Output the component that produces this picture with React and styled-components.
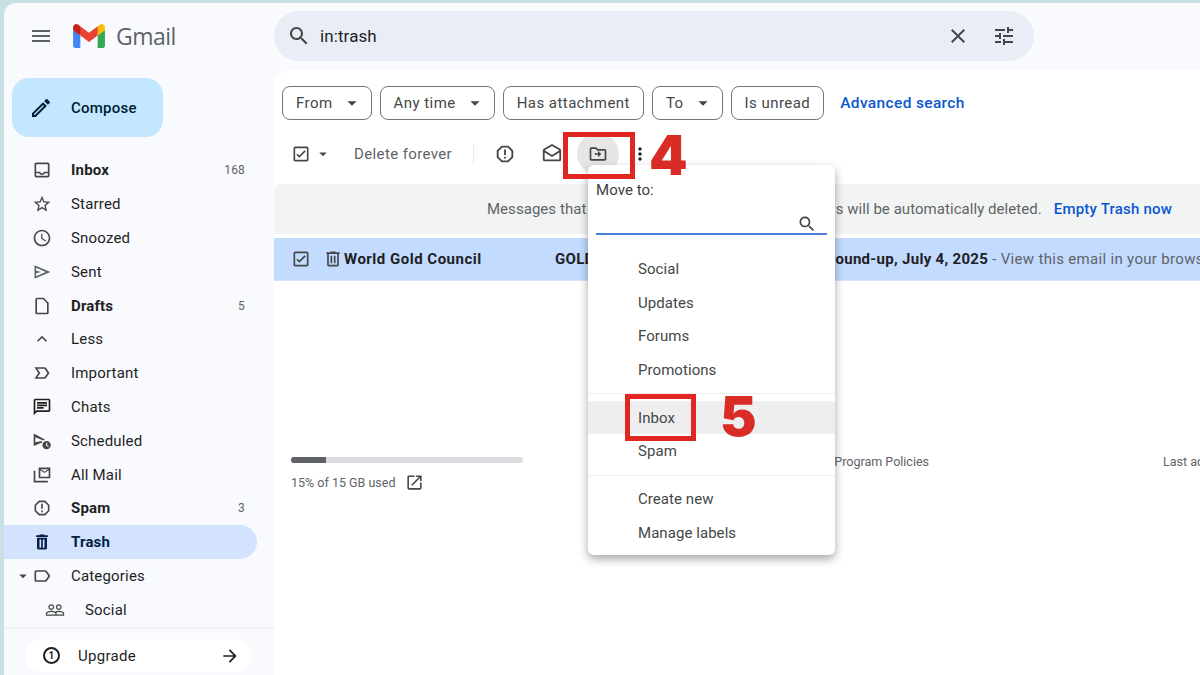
import React from "react";
import styled, { createGlobalStyle } from "styled-components";

const GlobalStyle = createGlobalStyle`
  html, body {
    margin: 0;
    height: 675px;
    overflow: hidden;
    background: #c9e1e5;
    font-family: Roboto, "Liberation Sans", sans-serif;
    color: #1f1f1f;
  }
  * { box-sizing: border-box; }
`;

const paths = {
  menu: "M3 18h18v-2H3v2zm0-5h18v-2H3v2zm0-7v2h18V6H3z",
  search: "M15.5 14h-.79l-.28-.27C15.41 12.59 16 11.11 16 9.5 16 5.91 13.09 3 9.5 3S3 5.91 3 9.5 5.91 16 9.5 16c1.61 0 3.09-.59 4.23-1.57l.27.28v.79l5 4.99L20.49 19l-4.99-5zm-6 0C7.01 14 5 11.99 5 9.5S7.01 5 9.5 5 14 7.01 14 9.5 11.99 14 9.5 14z",
  close: "M19 6.41L17.59 5 12 10.59 6.41 5 5 6.41 10.59 12 5 17.59 6.41 19 12 13.41 17.59 19 19 17.59 13.41 12z",
  tune: "M3 17v2h6v-2H3zM3 5v2h10V5H3zm10 16v-2h8v-2h-8v-2h-2v6h2zM7 9v2H3v2h4v2h2V9H7zm14 4v-2H11v2h10zm-6-4h2V7h4V5h-4V3h-2v6z",
  edit: "M14.06 9.02l.92.92L5.92 19H5v-.92l9.06-9.06M17.66 3c-.25 0-.51.1-.7.29l-1.83 1.83 3.75 3.75 1.83-1.83c.39-.39.39-1.02 0-1.41l-2.34-2.34c-.2-.2-.45-.29-.71-.29zm-3.6 3.19L3 17.25V21h3.75L17.81 9.94l-3.75-3.75z",
  inbox: "M19 3H5c-1.1 0-2 .9-2 2v14c0 1.1.9 2 2 2h14c1.1 0 2-.9 2-2V5c0-1.1-.9-2-2-2zm0 16H5v-3h3.56c.69 1.19 1.97 2 3.44 2s2.75-.81 3.44-2H19v3zm0-5h-4.99c0 1.1-.9 2-2 2s-2-.9-2-2H5V5h14v9z",
  star: "M22 9.24l-7.19-.62L12 2 9.19 8.63 2 9.24l5.46 4.73L5.82 21 12 17.27 18.18 21l-1.63-7.03L22 9.24zM12 15.4l-3.76 2.27 1-4.28-3.32-2.88 4.38-.38L12 6.1l1.71 4.04 4.38.38-3.32 2.88 1 4.28L12 15.4z",
  clock: "M11.99 2C6.47 2 2 6.48 2 12s4.47 10 9.99 10C17.52 22 22 17.52 22 12S17.52 2 11.99 2zM12 20c-4.42 0-8-3.58-8-8s3.58-8 8-8 8 3.58 8 8-3.58 8-8 8zm.5-13H11v6l5.25 3.15.75-1.23-4.5-2.67z",
  send: "M3 4v16l19-8L3 4zm2 3l11.5 5L5 17v-3.4l6-1.6-6-1.6V7z",
  draft: "M14 2H6c-1.1 0-1.99.9-1.99 2L4 20c0 1.1.89 2 1.99 2H18c1.1 0 2-.9 2-2V8l-6-6zM6 20V4h7.17L18 8.83V20H6z",
  less: "M12 8l-6 6 1.41 1.41L12 10.83l4.59 4.58L18 14z",
  important: "M15 19H3l4.5-7L3 5h12c.65 0 1.26.31 1.63.84L21 12l-4.37 6.16c-.37.52-.98.84-1.63.84zm-8.5-2H15l3.5-5L15 7H6.5l3.5 5-3.5 5z",
  chat: "M20 2H4c-1.1 0-1.99.9-1.99 2L2 22l4-4h14c1.1 0 2-.9 2-2V4c0-1.1-.9-2-2-2zm0 14H5.17L4 17.17V4h16v12zM6 12h8v2H6zm0-3h12v2H6zm0-3h12v2H6z",
  scheduled: "M2 3v15l10-4.2V12l-8 1.6V7.4l9.6 3.9 1.9-1L2 3zM17.5 12a5 5 0 100 10 5 5 0 000-10zm-.6 2h1.3v3l2 1.2-.6 1-2.7-1.6V14z",
  allMail: "M8 3h14v13H8V3zm2 3.2V14h10V6.2l-5 3.4-5-3.4zM10.6 5l4.4 3 4.4-3h-8.8zM2 7h2v12h15v2H2V7z",
  report: "M15.73 3H8.27L3 8.27v7.46L8.27 21h7.46L21 15.73V8.27L15.73 3zM19 14.9L14.9 19H9.1L5 14.9V9.1L9.1 5h5.8L19 9.1v5.8zM11 7h2v6h-2zm0 8h2v2h-2z",
  trash: "M15.5 4l-1-1h-5l-1 1H5v2h14V4h-3.5zM6 7v12c0 1.1.9 2 2 2h8c1.1 0 2-.9 2-2V7H6zm3 2h2v10H9V9zm4 0h2v10h-2V9z",
  trashLine: "M15 4V3H9v1H4v2h1v13c0 1.1.9 2 2 2h10c1.1 0 2-.9 2-2V6h1V4h-5zm2 15H7V6h10v13zM9 8h2v9H9zm4 0h2v9h-2z",
  label: "M17.63 5.84C17.27 5.33 16.67 5 16 5L5 5.01C3.9 5.01 3 5.9 3 7v10c0 1.1.9 1.99 2 1.99L16 19c.67 0 1.27-.33 1.63-.84L22 12l-4.37-6.16zM16 17H5V7h11l3.55 5L16 17z",
  people: "M16.5 13c-1.2 0-3.07.34-4.5 1-1.43-.67-3.3-1-4.5-1C5.33 13 1 14.08 1 16.25V19h22v-2.75c0-2.17-4.33-3.25-6.5-3.25zm-4 4.5h-10v-1.25c0-.54 2.56-1.75 5-1.75s5 1.21 5 1.75v1.25zm9 0H14v-1.25c0-.46-.2-.86-.52-1.22.88-.3 1.96-.53 3.02-.53 2.44 0 5 1.21 5 1.75v1.25zM7.5 12c1.93 0 3.5-1.57 3.5-3.5S9.43 5 7.5 5 4 6.57 4 8.5 5.57 12 7.5 12zm0-5.5c1.1 0 2 .9 2 2s-.9 2-2 2-2-.9-2-2 .9-2 2-2zm9 5.5c1.93 0 3.5-1.57 3.5-3.5S18.43 5 16.5 5 13 6.57 13 8.5s1.57 3.5 3.5 3.5zm0-5.5c1.1 0 2 .9 2 2s-.9 2-2 2-2-.9-2-2 .9-2 2-2z",
  arrow: "M12 4l-1.41 1.41L16.17 11H4v2h12.17l-5.58 5.59L12 20l8-8z",
  checkbox: "M19 3H5c-1.1 0-2 .9-2 2v14c0 1.1.9 2 2 2h14c1.1 0 2-.9 2-2V5c0-1.1-.9-2-2-2zm0 16H5V5h14v14zM17.6 9l-1.4-1.4-6.2 6.2-2.2-2.2L6.4 13l3.6 3.6L17.6 9z",
  caret: "M7 10l5 5 5-5z",
  openMail: "M21.99 8c0-.72-.37-1.35-.94-1.7L12 1 2.95 6.3C2.38 6.65 2 7.28 2 8v10c0 1.1.9 2 2 2h16c1.1 0 2-.9 2-2l-.01-10zM20 8v.01L12 13 4 8l8-4.68L20 8zM4 18v-7.66l8 5.02 7.99-4.99L20 18H4z",
  moveTo: "M20 6h-8l-2-2H4c-1.1 0-2 .9-2 2v12c0 1.1.9 2 2 2h16c1.1 0 2-.9 2-2V8c0-1.1-.9-2-2-2zm0 12H4V6h5.17l2 2H20v10zm-8-2l4-4-4-4v3H8v2h4v3z",
  dots: "M12 8c1.1 0 2-.9 2-2s-.9-2-2-2-2 .9-2 2 .9 2 2 2zm0 2c-1.1 0-2 .9-2 2s.9 2 2 2 2-.9 2-2-.9-2-2-2zm0 6c-1.1 0-2 .9-2 2s.9 2 2 2 2-.9 2-2-.9-2-2-2z",
  open: "M19 19H5V5h7V3H5c-1.11 0-2 .9-2 2v14c0 1.1.89 2 2 2h14c1.1 0 2-.89 2-2v-7h-2v7zM14 3v2h3.59l-9.83 9.83 1.41 1.41L19 6.41V10h2V3h-7z"
};

const Svg = styled.svg`
  display: block;
  flex: none;
  fill: currentColor;
`;

const Icon = ({ name, size = 20, color = "#444746" }) => (
  <Svg viewBox="0 0 24 24" width={size} height={size} style={{ color }}>
    <path fillRule="evenodd" d={paths[name]} />
  </Svg>
);

const Page = styled.div`
  display: flex;
  margin-top: 3px;
  margin-left: 4px;
  width: 1196px;
  height: 672px;
  position: relative;
  background: #f8fafd;
  border-top-left-radius: 12px;
  overflow: hidden;
`;

const Sidebar = styled.aside`
  width: 270px;
  flex: none;
  display: flex;
  flex-direction: column;
`;

const Brand = styled.div`
  height: 66px;
  display: flex;
  align-items: center;
  padding-left: 25px;
`;

const Logo = styled.svg`
  display: block;
  width: 32px;
  height: 24px;
  margin-left: 20px;
`;

const BrandName = styled.span`
  margin-left: 11px;
  font-size: 23px;
  color: #5f6368;
  font-family: "Open Sans", sans-serif;
  letter-spacing: -0.5px;
`;

const Compose = styled.button`
  display: flex;
  align-items: center;
  width: 151px;
  height: 59px;
  margin: 9px 0 16.5px 8px;
  padding: 0 0 0 17px;
  border: 0;
  border-radius: 17px;
  background: #c2e7ff;
  font: 500 15px Roboto, sans-serif;
  letter-spacing: 0.25px;
  color: #001d35;
  gap: 18px;
`;

const Nav = styled.nav`
  flex: 1;
  min-height: 0;
`;

const NavRow = styled.div`
  height: 33.8px;
  width: 253px;
  display: flex;
  align-items: center;
  padding-left: ${p => (p.$sub ? "41px" : "28px")};
  padding-right: 12px;
  border-radius: 0 17px 17px 0;
  position: relative;
  background: ${p => (p.$active ? "#d3e3fd" : "transparent")};
  color: ${p => (p.$active ? "#041e49" : "#1f1f1f")};
  font-size: 15px;
  letter-spacing: 0.18px;
  font-weight: ${p => (p.$bold ? 700 : 400)};
`;

const NavLabel = styled.span`
  flex: 1;
  margin-left: ${p => (p.$sub ? "20px" : "19px")};
`;

const NavCount = styled.span`
  font-size: 12px;
  font-weight: 400;
  color: #5f6368;
`;

const TreeCaret = styled.span`
  position: absolute;
  left: 10px;
  top: 8px;
  display: block;
`;

const SideFoot = styled.div`
  height: 48px;
  border-top: 2px solid #eff1f4;
  padding: 10px 0 0 21px;
`;

const Upgrade = styled.div`
  width: 227px;
  height: 33px;
  border-radius: 17px;
  background: #fff;
  display: flex;
  align-items: center;
  padding: 0 12px 0 18px;
  font-size: 15px;
  letter-spacing: 0.3px;
`;

const UpgradeBadge = styled.span`
  width: 17px;
  height: 17px;
  border: 2px solid #1f1f1f;
  border-radius: 50%;
  display: flex;
  align-items: center;
  justify-content: center;
  font-size: 10px;
  font-weight: 700;
`;

const UpgradeLabel = styled.span`
  flex: 1;
  margin-left: 18px;
`;

const Content = styled.main`
  flex: 1;
  min-width: 0;
  display: flex;
  flex-direction: column;
`;

const SearchWrap = styled.div`
  height: 67px;
  padding-top: 8px;
`;

const SearchBar = styled.div`
  width: 760px;
  height: 50px;
  border-radius: 25px;
  background: #e9eef6;
  display: flex;
  align-items: center;
  padding: 0 18px 0 13px;
  font-size: 17px;
  letter-spacing: 0.1px;
  color: #1f1f1f;
`;

const SearchText = styled.span`
  flex: 1;
  margin-left: 9px;
`;

const SearchAction = styled.span`
  margin-left: 22px;
`;

const Panel = styled.section`
  flex: 1;
  background: #fff;
  border-top-left-radius: 16px;
  min-height: 0;
  overflow: hidden;
`;

const Filters = styled.div`
  display: flex;
  align-items: center;
  gap: 8px;
  padding: 16px 0 0 8px;
`;

const Chip = styled.div`
  height: 34px;
  display: flex;
  align-items: center;
  gap: 8px;
  padding: 0 ${p => (p.$caret ? "8px" : "13px")} 0 13px;
  border: 1px solid #747775;
  border-radius: 8px;
  font-size: 15px;
  letter-spacing: 0.45px;
  color: #444746;
`;

const AdvancedLink = styled.a`
  margin-left: 8px;
  font-size: 15.5px;
  font-weight: 500;
  letter-spacing: 0.35px;
  color: #0b57d0;
`;

const Toolbar = styled.div`
  height: 46px;
  margin-top: 11px;
  display: flex;
  align-items: center;
  padding-left: 17px;
  color: #444746;
  font-size: 15px;
  letter-spacing: 0.38px;
`;

const DeleteLabel = styled.span`
  margin: 0 21px 0 19px;
  color: #5f6368;
`;

const ToolDivider = styled.span`
  width: 1px;
  height: 20px;
  background: #e8eaed;
`;

const ToolButton = styled.span`
  width: ${p => p.$w || 42}px;
  height: 42px;
  flex: none;
  margin-left: ${p => p.$gap || 0}px;
  display: flex;
  align-items: center;
  justify-content: center;
  border-radius: 50%;
  background: ${p => (p.$on ? "#e6e6e6" : "transparent")};
`;

const Notice = styled.div`
  height: 50px;
  margin-top: 7px;
  display: flex;
  align-items: center;
  justify-content: flex-end;
  padding-right: 28px;
  background: #f2f4f3;
  border-radius: 8px 0 0 0;
  font-size: 15px;
  letter-spacing: 0.05px;
  color: #5f6368;
  white-space: nowrap;
`;

const NoticeLink = styled.a`
  margin-left: 12px;
  font-weight: 500;
  letter-spacing: 0.2px;
  color: #0b57d0;
`;

const MailRow = styled.div`
  height: 43px;
  margin-top: 4px;
  display: flex;
  align-items: center;
  padding-left: 17px;
  background: #c2dbff;
  border-bottom: 1px solid #d5e3f7;
  font-size: 15px;
  letter-spacing: 0.2px;
  white-space: nowrap;
  overflow: hidden;
`;

const Sender = styled.b`
  width: 211px;
  flex: none;
  margin-left: 1px;
  letter-spacing: 0.5px;
  color: #202124;
`;

const Subject = styled.b`
  letter-spacing: 0.3px;
  color: #202124;
`;

const Snippet = styled.span`
  letter-spacing: 0.32px;
  color: #5f6368;
`;

const TrashSlot = styled.span`
  margin-left: 12px;
`;

const Foot = styled.div`
  display: flex;
  padding: 176px 0 0 17px;
  font-size: 12.5px;
  color: #5f6368;
  white-space: nowrap;
`;

const Storage = styled.div`
  width: 232px;
  flex: none;
`;

const StorageTrack = styled.div`
  height: 6px;
  border-radius: 3px;
  background: #dadce0;
  overflow: hidden;
`;

const StorageFill = styled.div`
  height: 100%;
  background: #5f6368;
`;

const StorageText = styled.div`
  margin-top: 10px;
  display: flex;
  align-items: center;
  gap: 10px;
`;

const Policies = styled.div`
  width: 406px;
  flex: none;
  text-align: right;
  margin-top: -3px;
`;

const LastActivity = styled.div`
  margin-left: 234px;
  margin-top: -3px;
`;

const MoveMenu = styled.div`
  position: absolute;
  left: 584px;
  top: 162px;
  width: 247px;
  height: 390px;
  background: #fff;
  border-radius: 6px;
  box-shadow: 0 4px 10px rgba(0, 0, 0, 0.35);
  padding-top: 14px;
  font-size: 15px;
  letter-spacing: 0.06px;
  color: #444746;
`;

const MenuTitle = styled.div`
  padding-left: 8px;
  line-height: 22px;
  color: #3c4043;
`;

const MenuSearch = styled.div`
  height: 25px;
  margin: 9px 8px 0;
  display: flex;
  justify-content: flex-end;
  align-items: center;
  padding: 4px 10px 0 0;
  border-bottom: 2px solid #4a7fd8;
`;

const MenuGroup = styled.div`
  padding: ${p => p.$pad || "0"};
  border-bottom: ${p => (p.$line ? "1px solid #eeeeee" : "0")};
`;

const MenuItem = styled.div`
  height: 33.7px;
  display: flex;
  align-items: center;
  padding-left: 50px;
  background: ${p => (p.$on ? "#eeeeee" : "transparent")};
`;

const Callout = styled.div`
  position: absolute;
  left: ${p => p.$x}px;
  top: ${p => p.$y}px;
  width: ${p => p.$w}px;
  height: 47px;
  border: 5px solid #df2620;
`;

const StepNumber = styled.span`
  position: absolute;
  left: ${p => p.$x}px;
  top: ${p => p.$y}px;
  font-family: Inter, "Liberation Sans", sans-serif;
  font-weight: 900;
  font-size: 55px;
  line-height: 57px;
  color: #d92c27;
`;

const nav = [
  { icon: "inbox", label: "Inbox", bold: true, count: "168" },
  { icon: "star", label: "Starred" },
  { icon: "clock", label: "Snoozed" },
  { icon: "send", label: "Sent", color: "#5f6368" },
  { icon: "draft", label: "Drafts", bold: true, count: "5" },
  { icon: "less", label: "Less" },
  { icon: "important", label: "Important" },
  { icon: "chat", label: "Chats", color: "#1f1f1f" },
  { icon: "scheduled", label: "Scheduled" },
  { icon: "allMail", label: "All Mail" },
  { icon: "report", label: "Spam", bold: true, count: "3" },
  { icon: "trash", label: "Trash", bold: true, active: true, color: "#041e49" },
  { icon: "label", label: "Categories", tree: true },
  { icon: "people", label: "Social", sub: true }
];

const GmailLogo = () => (
  <Logo viewBox="0 0 256 193">
    <path fill="#4285F4" d="M58.182 192.05V93.14L27.507 65.077 0 49.504v125.091c0 9.658 7.825 17.455 17.455 17.455h40.727z" />
    <path fill="#34A853" d="M197.818 192.05h40.727c9.659 0 17.455-7.826 17.455-17.455V49.505l-31.156 17.837-27.026 25.798v98.91z" />
    <path fill="#EA4335" d="M58.182 93.14l-4.174-38.647 4.174-36.989L128 69.868l69.818-52.364 4.669 34.992-4.669 40.644L128 145.504z" />
    <path fill="#FBBC04" d="M197.818 17.504V93.14L256 49.504V26.231c0-21.585-24.64-33.89-41.89-20.945l-16.292 12.218z" />
    <path fill="#C5221F" d="M0 49.504l26.759 20.07L58.182 93.14V17.504L41.89 5.286C24.61-7.66 0 4.646 0 26.23v23.273z" />
  </Logo>
);

const App = () => (
  <>
    <GlobalStyle />
    <Page>
      <Sidebar>
        <Brand>
          <Icon name="menu" size={24} color="#5f6368" />
          <GmailLogo />
          <BrandName>Gmail</BrandName>
        </Brand>
        <Compose>
          <Icon name="edit" size={24} color="#001d35" />
          Compose
        </Compose>
        <Nav>
          {nav.map(item => (
            <NavRow key={item.label} $bold={item.bold} $active={item.active} $sub={item.sub}>
              {item.tree && (
                <TreeCaret>
                  <Icon name="caret" size={18} />
                </TreeCaret>
              )}
              <Icon name={item.icon} size={20} color={item.color || "#444746"} />
              <NavLabel $sub={item.sub}>{item.label}</NavLabel>
              {item.count && <NavCount>{item.count}</NavCount>}
            </NavRow>
          ))}
        </Nav>
        <SideFoot>
          <Upgrade>
            <UpgradeBadge>1</UpgradeBadge>
            <UpgradeLabel>Upgrade</UpgradeLabel>
            <Icon name="arrow" size={20} color="#1f1f1f" />
          </Upgrade>
        </SideFoot>
      </Sidebar>

      <Content>
        <SearchWrap>
          <SearchBar>
            <Icon name="search" size={24} color="#444746" />
            <SearchText>in:trash</SearchText>
            <SearchAction>
              <Icon name="close" size={24} color="#444746" />
            </SearchAction>
            <SearchAction>
              <Icon name="tune" size={24} color="#444746" />
            </SearchAction>
          </SearchBar>
        </SearchWrap>

        <Panel>
          <Filters>
            <Chip $caret>From <Icon name="caret" size={22} /></Chip>
            <Chip $caret>Any time <Icon name="caret" size={22} /></Chip>
            <Chip>Has attachment</Chip>
            <Chip $caret>To <Icon name="caret" size={22} /></Chip>
            <Chip>Is unread</Chip>
            <AdvancedLink>Advanced search</AdvancedLink>
          </Filters>

          <Toolbar>
            <Icon name="checkbox" size={20} />
            <ToolButton $w={24}><Icon name="caret" size={18} /></ToolButton>
            <DeleteLabel>Delete forever</DeleteLabel>
            <ToolDivider />
            <ToolButton $w={62}><Icon name="report" size={22} /></ToolButton>
            <ToolButton $w={32}><Icon name="openMail" size={22} /></ToolButton>
            <ToolButton $on $gap={9}><Icon name="moveTo" size={20} /></ToolButton>
            <ToolButton><Icon name="dots" size={20} color="#1f1f1f" /></ToolButton>
          </Toolbar>

          <Notice>
            Messages that have been in Trash more than 30 days will be automatically deleted.
            <NoticeLink>Empty Trash now</NoticeLink>
          </Notice>

          <MailRow>
            <Icon name="checkbox" size={20} />
            <TrashSlot><Icon name="trashLine" size={20} /></TrashSlot>
            <Sender>World Gold Council</Sender>
            <Subject>GOLD Market Commentary: the weekly round-up, July 4, 2025</Subject>
            <Snippet>&nbsp;- View this email in your browser</Snippet>
          </MailRow>

          <Foot>
            <Storage>
              <StorageTrack>
                <StorageFill style={{ width: "15%" }} />
              </StorageTrack>
              <StorageText>
                15% of 15 GB used
                <Icon name="open" size={19} />
              </StorageText>
            </Storage>
            <Policies>Terms · Privacy · Program Policies</Policies>
            <LastActivity>Last account activity: 1 hour ago</LastActivity>
          </Foot>
        </Panel>
      </Content>

      <MoveMenu>
        <MenuTitle>Move to:</MenuTitle>
        <MenuSearch>
          <Icon name="search" size={20} color="#444746" />
        </MenuSearch>
        <MenuGroup $pad="17px 0 6px" $line>
          <MenuItem>Social</MenuItem>
          <MenuItem>Updates</MenuItem>
          <MenuItem>Forums</MenuItem>
          <MenuItem>Promotions</MenuItem>
        </MenuGroup>
        <MenuGroup $pad="7px 0 7px" $line>
          <MenuItem $on>Inbox</MenuItem>
          <MenuItem>Spam</MenuItem>
        </MenuGroup>
        <MenuGroup $pad="6px 0 0">
          <MenuItem>Create new</MenuItem>
          <MenuItem>Manage labels</MenuItem>
        </MenuGroup>
      </MoveMenu>

      <Callout $x={559} $y={129} $w={72} />
      <StepNumber $x={645} $y={124}>4</StepNumber>
      <Callout $x={621} $y={391} $w={71} />
      <StepNumber $x={716} $y={385}>5</StepNumber>
    </Page>
  </>
);

export default App;
